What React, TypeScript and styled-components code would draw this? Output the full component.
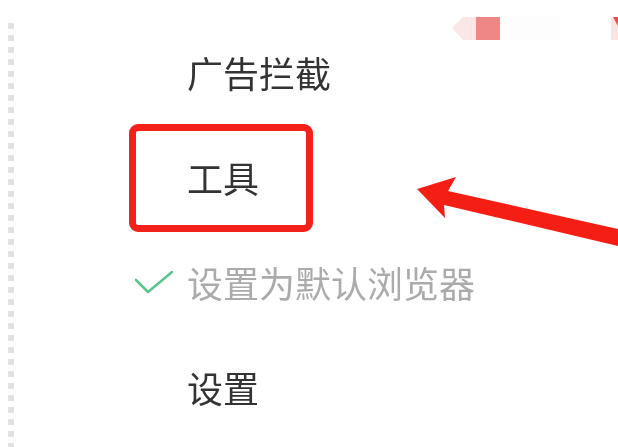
import React from 'react';
import styled, { createGlobalStyle } from 'styled-components';

const GlobalStyle = createGlobalStyle`
	html, body {
		margin: 0;
		padding: 0;
		background: #ffffff;
	}
	* {
		box-sizing: border-box;
	}
`;

type MenuEntry = {
	label: string;
	checked?: boolean;
	muted?: boolean;
	highlighted?: boolean;
};

const entries: MenuEntry[] = [
	{ label: '广告拦截' },
	{ label: '工具', highlighted: true },
	{ label: '设置为默认浏览器', checked: true, muted: true },
	{ label: '设置' },
];

const CheckIcon = () => (
	<svg width='38' height='24' viewBox='0 0 38 24' fill='none'>
		<polyline points='1,9 13,21 37,1' stroke='#5cc48e' strokeWidth='2.6' strokeLinecap='round' strokeLinejoin='round' />
	</svg>
);

const Decorations = () => (
	<Overlay width='618' height='447' viewBox='0 0 618 447'>
		{/* blurred bits of the window behind */}
		<polygon points='452,28 463,17 476,17 476,40 463,40' fill='#fbe7e6' />
		<rect x='476' y='17' width='24' height='23' fill='#f08787' />
		<rect x='500' y='17' width='60' height='23' fill='#fdfdfd' />
		<rect x='611' y='17' width='7' height='23' fill='#fbe3e2' />
		<polygon points='613,17 618,17 618,26' fill='#f24a44' />
		{/* annotation arrow */}
		<polygon
			points='417,189 456,177 448,191 618,229 618,246 444,205 445,218'
			fill='#f41e14'
		/>
	</Overlay>
);

const App = (): React.FunctionComponentElement<JSX.Element> => {
	return (
		<>
			<GlobalStyle />
			<Page>
				<Panel>
					<Rail />
					<Menu>
						{entries.map((entry) => (
							<Item key={entry.label} $muted={entry.muted}>
								{entry.highlighted && <Highlight />}
								<IconSlot>{entry.checked && <CheckIcon />}</IconSlot>
								<Label>{entry.label}</Label>
							</Item>
						))}
					</Menu>
				</Panel>
				<Decorations />
			</Page>
		</>
	);
};

const Page = styled.div`
	position: relative;
	width: 618px;
	height: 447px;
	overflow: hidden;
	background: #ffffff;
	font-family: 'Noto Sans CJK SC', 'Noto Sans', sans-serif;
	filter: blur(0.5px);
`;

const Panel = styled.div`
	display: flex;
	height: 100%;
	padding-left: 8px;
`;

const Rail = styled.div`
	width: 6px;
	margin-top: 23px;
	background: repeating-linear-gradient(to bottom, #e1e1e1 0 6px, transparent 6px 12px);
`;

const Menu = styled.ul`
	list-style: none;
	margin: 0;
	padding: 19px 0 0 121px;
`;

const Item = styled.li<{ $muted?: boolean }>`
	position: relative;
	display: flex;
	align-items: center;
	height: 105px;
	font-size: 36px;
	line-height: 1;
	color: ${(p) => (p.$muted ? '#ababab' : '#333333')};
	white-space: nowrap;
`;

const IconSlot = styled.span`
	display: flex;
	align-items: center;
	width: 52px;
	height: 24px;
	margin-top: 2px;
`;

const Label = styled.span`
	display: block;
`;

const Highlight = styled.span`
	position: absolute;
	left: -6px;
	top: 0;
	width: 184px;
	height: 108px;
	border: 7px solid #f3211a;
	border-radius: 9px;
`;

const Overlay = styled.svg`
	position: absolute;
	top: 0;
	left: 0;
	pointer-events: none;
`;

export default App;
